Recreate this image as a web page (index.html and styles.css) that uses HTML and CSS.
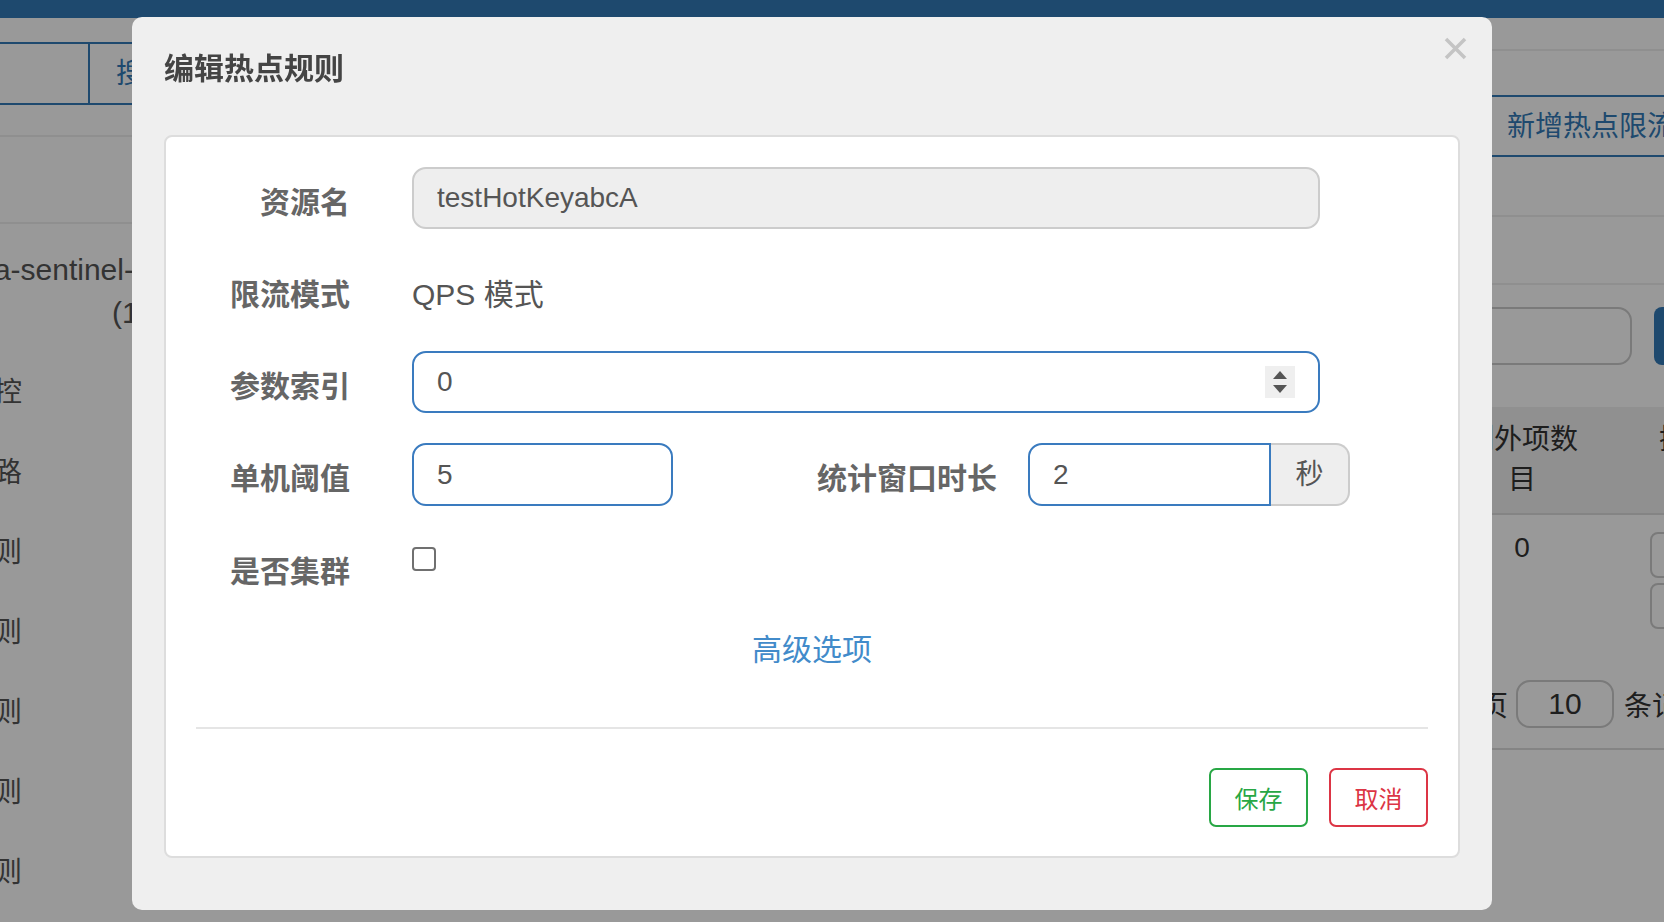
FILE: index.html
```html
<!DOCTYPE html>
<html lang="zh-CN">
  <head>
    <meta charset="UTF-8" />
    <meta name="viewport" content="width=device-width, initial-scale=1.0" />
    <title>编辑热点规则</title>
    <link rel="stylesheet" href="styles.css">
  </head>
  <body>
    <div class="topbar"></div>
    <div class="page">
      <aside class="left-pane">
        <div class="tabs">
          <div class="tab"></div>
          <div class="tab tab-search">搜索</div>
        </div>
        <div class="name-strip"></div>
        <div class="app-name">
          <div class="app-name-line">cloud-alibaba-sentinel-demo</div>
          <div class="app-name-sub">(1/1)</div>
        </div>
        <ul class="menu">
          <li>实时监控</li>
          <li>簇点链路</li>
          <li>流控规则</li>
          <li>降级规则</li>
          <li>热点规则</li>
          <li>系统规则</li>
          <li>授权规则</li>
        </ul>
      </aside>

      <main class="right-pane">
        <div class="page-head"></div>
        <div class="add-btn">新增热点限流规则</div>
        <div class="rule-line"></div>
        <div class="rule-line second"></div>
        <div class="search-row">
          <div class="search-input"></div>
          <div class="search-btn"></div>
        </div>
        <div class="table">
          <div class="table-head">
            <div class="cell-count">例外项数目</div>
            <div class="cell-ops">操作</div>
          </div>
          <div class="table-row">
            <div class="cell-count">0</div>
            <div class="cell-ops">
              <div class="op-btn">编辑</div>
              <div class="op-btn">删除</div>
            </div>
          </div>
        </div>
        <div class="pager">
          <span>每页</span>
          <div class="pager-size">10</div>
          <span>条记录</span>
        </div>
      </main>
    </div>

    <div class="backdrop"></div>

    <div class="modal">
      <div class="modal-header">
        <h4 class="modal-title">编辑热点规则</h4>
        <button class="close-btn" type="button">
          <svg width="23" height="23" viewBox="0 0 23 23">
            <path d="M2 2 L21 21 M21 2 L2 21" stroke="#c4c4c4" stroke-width="3.5" fill="none" />
          </svg>
        </button>
      </div>

      <div class="panel">
        <div class="form-row">
          <label class="form-label">资源名</label>
          <input class="form-input wide" type="text" value="testHotKeyabcA" disabled />
        </div>

        <div class="form-row">
          <label class="form-label">限流模式</label>
          <p class="form-static">QPS 模式</p>
        </div>

        <div class="form-row">
          <label class="form-label">参数索引</label>
          <div class="number-field">
            <input class="form-input wide active" type="text" value="0" />
            <span class="spinner">
              <span class="arrow-up"></span>
              <span class="arrow-down"></span>
            </span>
          </div>
        </div>

        <div class="form-row">
          <label class="form-label">单机阈值</label>
          <div class="inline-fields">
            <input class="form-input short active" type="text" value="5" />
            <label class="form-label inline-label">统计窗口时长</label>
            <div class="input-group">
              <input class="form-input group-input active" type="text" value="2" />
              <span class="addon">秒</span>
            </div>
          </div>
        </div>

        <div class="form-row">
          <label class="form-label">是否集群</label>
          <div>
            <input class="checkbox" type="checkbox" />
          </div>
        </div>

        <div class="advanced">
          <a class="advanced-link">高级选项</a>
        </div>

        <hr class="divider" />

        <div class="footer">
          <button class="btn btn-save" type="button">保存</button>
          <button class="btn btn-cancel" type="button">取消</button>
        </div>
      </div>
    </div>
  </body>
</html>
```

FILE: styles.css
```css
body {
  margin: 0;
  width: 1664px;
  height: 922px;
  overflow: hidden;
  font-family: "Liberation Sans", "Noto Sans CJK SC", sans-serif;
  font-size: 28px;
  color: #333;
  background-color: #fff;
}

/* page behind the dialog */

.topbar {
  height: 18px;
  background-color: #337ab7;
}

.page {
  display: flex;
  height: 904px;
}

.left-pane {
  width: 240px;
  flex: none;
}

.tabs {
  display: flex;
  margin-top: 24px;
  height: 59px;
  border-top: 2px solid #337ab7;
  border-bottom: 2px solid #337ab7;
}

.tab {
  width: 88px;
  flex: none;
  border-right: 2px solid #337ab7;
}

.tab-search {
  width: 16px;
  padding-left: 26px;
  overflow: hidden;
  line-height: 59px;
  color: #337ab7;
  white-space: nowrap;
  border-right: none;
}

.name-strip {
  margin-top: 30px;
  height: 85px;
  border-top: 2px solid #eee;
  border-bottom: 2px solid #eee;
}

.app-name {
  margin-top: 24px;
  font-size: 30px;
  line-height: 43px;
  color: #555;
}

.app-name-line {
  display: flex;
  justify-content: flex-end;
  width: 209px;
  white-space: nowrap;
}

.app-name-sub {
  padding-left: 112px;
  white-space: nowrap;
}

.menu {
  list-style: none;
  margin: 19px 0 0;
  padding: 0;
}

.menu li {
  display: flex;
  justify-content: flex-end;
  width: 22px;
  height: 80px;
  line-height: 80px;
  white-space: nowrap;
  color: #555;
}

.right-pane {
  margin-left: auto;
  width: 224px;
  flex: none;
}

.page-head {
  height: 31px;
  border-bottom: 2px solid #eee;
}

.add-btn {
  box-sizing: border-box;
  width: 320px;
  height: 62px;
  margin: 44px 0 0 40px;
  padding-left: 25px;
  border: 2px solid #337ab7;
  border-radius: 8px;
  line-height: 60px;
  color: #337ab7;
  white-space: nowrap;
}

.rule-line {
  margin-top: 58px;
  border-top: 2px solid #eee;
}

.rule-line.second {
  margin-top: 66px;
}

.search-row {
  display: flex;
  gap: 22px;
  margin-top: 22px;
  height: 58px;
}

.search-input {
  box-sizing: border-box;
  width: 192px;
  flex: none;
  border: 2px solid #ccc;
  border-radius: 14px;
}

.search-btn {
  width: 120px;
  flex: none;
  background-color: #337ab7;
  border-radius: 8px;
}

.table {
  margin-top: 42px;
  width: 400px;
}

.table-head {
  display: flex;
  height: 106px;
  background-color: #f0f0f0;
  border-bottom: 2px solid #ddd;
}

.cell-count {
  box-sizing: border-box;
  width: 164px;
  flex: none;
  padding: 13px 16px;
  line-height: 40px;
  text-align: center;
}

.table-head .cell-ops {
  padding: 13px 0 0 55px;
  line-height: 40px;
}

.table-row {
  display: flex;
  height: 134px;
}

.table-row .cell-ops {
  padding: 17px 0 0 46px;
}

.op-btn {
  box-sizing: border-box;
  width: 90px;
  height: 46px;
  margin-bottom: 5px;
  padding-left: 12px;
  border: 2px solid #ccc;
  border-radius: 8px;
  font-size: 24px;
  line-height: 42px;
  white-space: nowrap;
}

.pager {
  display: flex;
  align-items: center;
  gap: 8px;
  height: 89px;
  padding: 10px 0 0 12px;
  border-bottom: 2px solid #ddd;
  white-space: nowrap;
  width: 400px;
}

.pager-size {
  box-sizing: border-box;
  width: 98px;
  height: 48px;
  margin-right: 2px;
  border: 2px solid #ccc;
  border-radius: 14px;
  text-align: center;
  font-size: 30px;
  line-height: 44px;
}

.backdrop {
  position: fixed;
  top: 0;
  left: 0;
  right: 0;
  bottom: 0;
  background-color: rgba(0, 0, 0, 0.4);
}

/* dialog */

.modal {
  position: absolute;
  top: 17px;
  left: 132px;
  width: 1360px;
  box-sizing: border-box;
  padding: 0 32px 52px;
  background-color: #efefef;
  border-radius: 10px;
}

.modal-header {
  position: relative;
  padding: 30px 0 45px;
}

.modal-title {
  margin: 0;
  font-size: 30px;
  line-height: 43px;
  font-weight: bold;
  color: #444;
}

.close-btn {
  position: absolute;
  top: 20px;
  right: -7px;
  padding: 0;
  border: none;
  background: none;
  width: 23px;
  height: 23px;
}

.close-btn svg {
  display: block;
}

.panel {
  padding: 30px 30px 29px;
  background-color: #fff;
  border: 2px solid #ddd;
  border-radius: 8px;
}

.form-row {
  display: grid;
  grid-template-columns: 154px 1fr;
  column-gap: 62px;
  min-height: 62px;
  margin-bottom: 30px;
}

.form-label {
  padding-top: 14px;
  font-size: 30px;
  line-height: 43px;
  font-weight: bold;
  text-align: right;
  color: #666;
  white-space: nowrap;
}

.form-static {
  margin: 0;
  padding-top: 14px;
  font-size: 30px;
  line-height: 43px;
  color: #555;
}

.form-input {
  box-sizing: border-box;
  height: 62px;
  padding: 0 23px;
  border: 2px solid #ccc;
  border-radius: 14px;
  font-family: "Liberation Sans", "Noto Sans CJK SC", sans-serif;
  font-size: 28px;
  color: #555;
  background-color: #fff;
  outline: none;
}

.form-input:disabled {
  background-color: #eee;
  -webkit-text-fill-color: #555;
  opacity: 1;
}

.form-input.active {
  border-color: #3a7bbf;
}

.form-input.wide {
  width: 908px;
}

.form-input.short {
  width: 261px;
  height: 63px;
}

.number-field {
  position: relative;
  width: 908px;
}

.spinner {
  position: absolute;
  top: 15px;
  right: 25px;
  width: 30px;
  height: 32px;
  background-color: #efefef;
}

.arrow-up,
.arrow-down {
  position: absolute;
  left: 8px;
  width: 0;
  height: 0;
  border-left: 7px solid transparent;
  border-right: 7px solid transparent;
}

.arrow-up {
  top: 5px;
  border-bottom: 8px solid #555;
}

.arrow-down {
  top: 19px;
  border-top: 8px solid #555;
}

.inline-fields {
  display: flex;
  align-items: flex-start;
}

.inline-label {
  box-sizing: border-box;
  width: 324px;
  flex: none;
}

.input-group {
  display: flex;
  margin-left: 31px;
}

.group-input {
  width: 243px;
  height: 63px;
  border-radius: 14px 0 0 14px;
}

.addon {
  box-sizing: border-box;
  width: 79px;
  height: 63px;
  border: 2px solid #ccc;
  border-left: none;
  border-radius: 0 14px 14px 0;
  background-color: #eee;
  text-align: center;
  line-height: 59px;
  color: #555;
}

.checkbox {
  appearance: none;
  box-sizing: border-box;
  width: 24px;
  height: 24px;
  margin: 11px 0 0;
  border: 2px solid #707070;
  border-radius: 4px;
  background-color: #fff;
}

.advanced {
  text-align: center;
  line-height: 43px;
}

.advanced-link {
  font-size: 30px;
  color: #428bca;
  cursor: pointer;
}

.divider {
  margin: 55px 0 39px;
  border: none;
  border-top: 2px solid #e5e5e5;
}

.footer {
  display: flex;
  justify-content: flex-end;
  gap: 21px;
}

.btn {
  box-sizing: border-box;
  width: 99px;
  height: 59px;
  padding: 0;
  border: 2px solid;
  border-radius: 7px;
  background-color: #fff;
  font-family: "Liberation Sans", "Noto Sans CJK SC", sans-serif;
  font-size: 24px;
  cursor: pointer;
}

.btn-save {
  border-color: #28a745;
  color: #28a745;
}

.btn-cancel {
  border-color: #dc3545;
  color: #dc3545;
}
```
